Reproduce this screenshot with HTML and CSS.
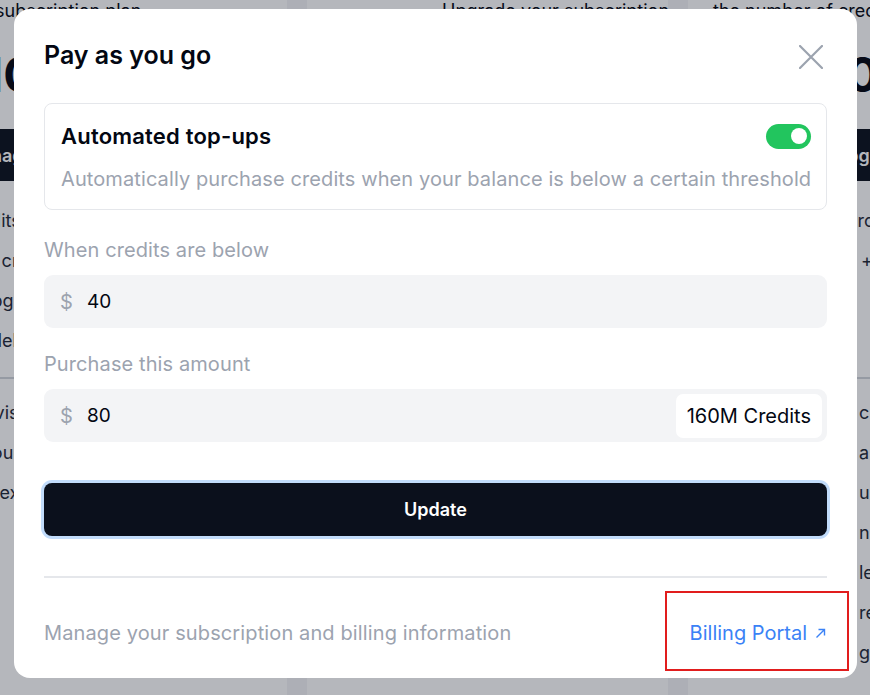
FILE: index.html
```html
<!DOCTYPE html>
<html lang="en">
<head>
<meta charset="utf-8">
<title>Pay as you go</title>
<link rel="stylesheet" href="styles.css">
</head>
<body>
<div class="page">
  <section class="plan plan-left">
    <p class="plan-top">Your subscription plan</p>
    <p class="plan-price">$10</p>
    <div class="plan-btn">Manage</div>
    <ul class="plan-list">
      <li class="l1">Credits</li>
      <li class="l2">Buy credits</li>
      <li class="l3">Upgrade</li>
      <li class="l4">Models</li>
    </ul>
    <ul class="plan-list plan-list-2">
      <li class="l5">Advise</li>
      <li class="l6">Your usage</li>
      <li class="l7">Index</li>
    </ul>
  </section>
  <section class="plan plan-mid">
    <p class="plan-top plan-top-mid">Upgrade your subscription</p>
  </section>
  <section class="plan plan-right">
    <p class="plan-top">the number of credits</p>
    <p class="plan-price">$0</p>
    <div class="plan-btn">Upgrade</div>
    <ul class="plan-list plan-list-short">
      <li class="r1">Pro</li>
      <li class="r2">+</li>
    </ul>
    <ul class="plan-list plan-list-2">
      <li>c</li>
      <li>a</li>
      <li>up</li>
      <li>n</li>
      <li>le</li>
      <li>re</li>
      <li>gra</li>
    </ul>
  </section>
</div>
<div class="overlay"></div>
<div class="modal" role="dialog">
  <header class="modal-head">
    <h2 class="modal-title">Pay as you go</h2>
    <button class="close" aria-label="Close">
      <svg width="24" height="24" viewBox="0 0 24 24"><path d="M1 1L23 23M23 1L1 23" stroke="#9ca3af" stroke-width="2.2" stroke-linecap="round" fill="none"/></svg>
    </button>
  </header>
  <div class="auto-card">
    <div class="auto-row">
      <h3 class="auto-title">Automated top-ups</h3>
      <span class="toggle"><span class="knob"></span></span>
    </div>
    <p class="auto-desc">Automatically purchase credits when your balance is below a certain threshold</p>
  </div>
  <label class="field-label">When credits are below</label>
  <div class="field"><span class="cur">$</span><span class="val">40</span></div>
  <label class="field-label field-label-2">Purchase this amount</label>
  <div class="field"><span class="cur">$</span><span class="val">80</span><span class="credits">160M Credits</span></div>
  <button class="update">Update</button>
  <hr class="divider">
  <footer class="modal-foot">
    <span class="foot-text">Manage your subscription and billing information</span>
    <a class="portal" href="#">Billing Portal <svg width="11" height="11" viewBox="0 0 11 11"><path d="M1.5 9.5L9.5 1.5M3.5 1.5H9.5V7.5" stroke="#3b82f6" stroke-width="1.4" fill="none"/></svg></a>
  </footer>
</div>
</body>
</html>
```

FILE: styles.css
```css
* { box-sizing: border-box; }
html, body { margin: 0; padding: 0; }
body {
  width: 870px;
  height: 695px;
  overflow: hidden;
  background: #f3f4f6;
  font-family: Inter, "Noto Sans", sans-serif;
  color: #030712;
}
p, h2, h3, ul { margin: 0; padding: 0; }
ul { list-style: none; }

.page {
  display: grid;
  grid-template-columns: 361px 361px 361px;
  column-gap: 20px;
  margin-left: -74px;
  height: 695px;
}
.plan {
  background: #ffffff;
  padding: 0 25px;
  overflow: hidden;
  height: 695px;
}
.plan-top {
  font-size: 18px;
  line-height: 20px;
  padding-top: 1px;
  white-space: nowrap;
}
.plan-top-mid { padding-left: 110px; }
.plan-price {
  font-size: 48px;
  font-weight: 700;
  line-height: 56px;
  margin-top: 26px;
  white-space: nowrap;
}
.plan-right .plan-price { padding-left: 102px; }
.plan-btn {
  margin: 26px -5px 0;
  height: 52px;
  background: #0b101c;
  color: #fff;
  font-size: 18px;
  font-weight: 600;
  display: flex;
  align-items: center;
  padding-left: 18px;
  white-space: nowrap;
}
.plan-right .plan-btn { padding-left: 126px; }
.plan-list {
  font-size: 18px;
  line-height: 40px;
  color: #1f2937;
  margin-top: 20px;
  padding-bottom: 16px;
  border-bottom: 2px solid #d1d5db;
  white-space: nowrap;
}
.l1 { padding-left: 9px; }
.l2 { padding-left: 13px; }
.l3 { padding-left: 27px; }
.l4 { padding-left: 13px; }
.l5 { padding-left: 20px; }
.l6 { padding-left: 30px; }
.l7 { padding-left: 22px; }
.plan-right .plan-list li { padding-left: 146px; }
.plan-right .plan-list .r1 { padding-left: 133px; }
.plan-right .plan-list .r2 { padding-left: 148px; }
.plan-list-short { padding-bottom: 96px; }
.plan-list-2 { border-bottom: none; margin-top: 14px; }

.overlay {
  position: fixed;
  inset: 0;
  background: rgba(17, 24, 39, 0.31);
}

.modal {
  position: fixed;
  left: 14px;
  top: 9px;
  width: 843px;
  height: 669px;
  background: #ffffff;
  border-radius: 16px;
  padding: 30px 30px 31px;
  display: flex;
  flex-direction: column;
}
.modal-head {
  display: flex;
  justify-content: space-between;
  align-items: center;
  height: 32px;
}
.modal-title {
  font-size: 25px;
  line-height: 32px;
  font-weight: 600;
  color: #030712;
}
.close {
  border: 0;
  background: none;
  padding: 0;
  margin-right: 4px;
  margin-top: 4px;
  width: 24px;
  height: 24px;
  display: block;
}
.close svg { display: block; }

.auto-card {
  margin-top: 32px;
  border: 1px solid #e5e7eb;
  border-radius: 8px;
  padding: 18px 15px 16px 16px;
}
.auto-row {
  display: flex;
  justify-content: space-between;
  align-items: center;
  height: 28px;
}
.auto-title {
  font-size: 22px;
  line-height: 28px;
  font-weight: 600;
  letter-spacing: 0.2px;
  color: #030712;
}
.toggle {
  width: 45px;
  height: 25px;
  border-radius: 13px;
  background: #22c55e;
  display: flex;
  align-items: center;
  justify-content: flex-end;
  padding-right: 4px;
}
.knob {
  width: 16px;
  height: 16px;
  border-radius: 50%;
  background: #ffffff;
}
.auto-desc {
  margin-top: 15px;
  font-size: 20px;
  line-height: 28px;
  letter-spacing: 0.1px;
  color: #9ca3af;
  white-space: nowrap;
}

.field-label {
  display: block;
  margin-top: 26px;
  font-size: 20px;
  line-height: 28px;
  letter-spacing: 0.1px;
  color: #9ca3af;
}
.field-label-2 { margin-top: 22px; }
.field {
  margin-top: 11px;
  height: 53px;
  background: #f3f4f6;
  border-radius: 9px;
  display: flex;
  align-items: center;
  padding: 0 5px 0 16px;
}
.cur {
  font-size: 20px;
  color: #9ca3af;
  width: 27px;
}
.val {
  font-size: 19px;
  color: #030712;
  flex: 1;
}
.credits {
  background: #ffffff;
  border-radius: 7px;
  height: 44px;
  padding: 0 11px;
  display: flex;
  align-items: center;
  font-size: 20px;
  color: #030712;
}

.update {
  margin-top: 41px;
  height: 53px;
  border: 0;
  border-radius: 8px;
  background: #0b101c;
  color: #ffffff;
  font-family: Inter, "Noto Sans", sans-serif;
  font-size: 18px;
  font-weight: 600;
  box-shadow: 0 0 0 3px #c2dcfb;
}

.divider {
  margin: 40px 0 0;
  border: 0;
  height: 2px;
  background: #e5e7eb;
}

.modal-foot {
  margin-top: auto;
  display: flex;
  justify-content: space-between;
  align-items: center;
  height: 28px;
}
.foot-text {
  font-size: 20px;
  line-height: 28px;
  letter-spacing: 0.12px;
  color: #9ca3af;
}
.portal {
  position: relative;
  font-size: 20px;
  line-height: 28px;
  color: #3b82f6;
  text-decoration: none;
  display: flex;
  align-items: center;
  gap: 8px;
  margin-right: 1px;
}
.portal::after {
  content: "";
  position: absolute;
  left: -25px;
  right: -23px;
  top: -28px;
  bottom: -24px;
  border: 2px solid #e11d1d;
}
```
